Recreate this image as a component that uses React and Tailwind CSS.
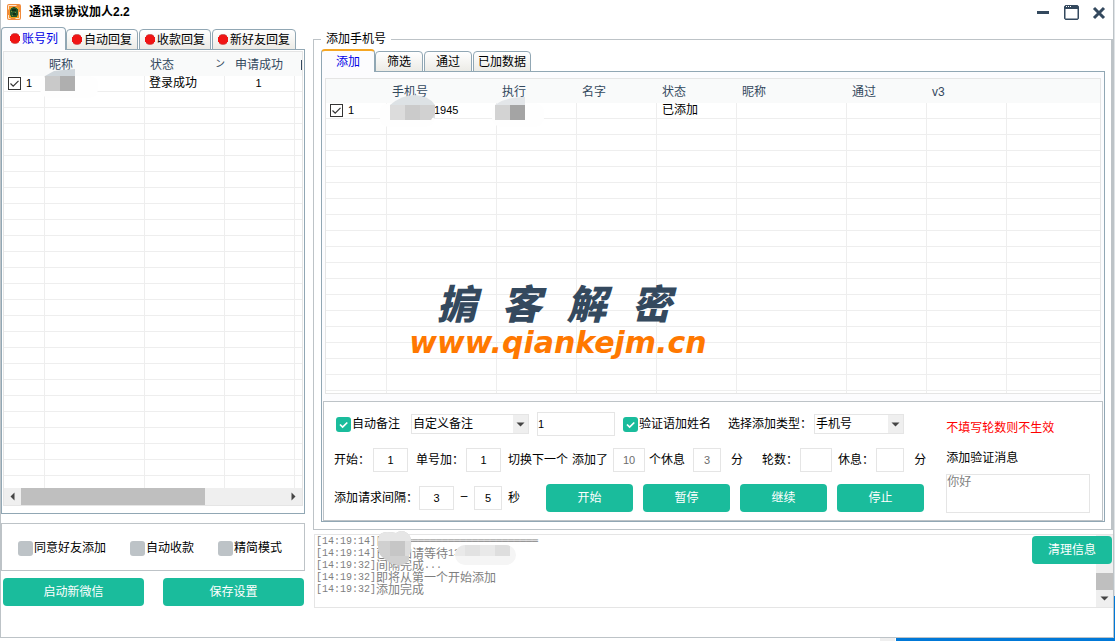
import { useState } from "react";
import clsx from "clsx";

const ACCOUNT_TABS = ["账号列", "自动回复", "收款回复", "新好友回复"];
const PHONE_TABS = ["添加", "筛选", "通过", "已加数据"];

const LOGS = [
  { time: "[14:19:14]", mono: "[══════════════════════════" },
  { time: "[14:19:14]", text: "已添加请等待", mono: "13" },
  { time: "[14:19:32]", text: "间隔完成", mono: "..." },
  { time: "[14:19:32]", text: "即将从第一个开始添加" },
  { time: "[14:19:32]", text: "添加完成" },
];

const emptyRows = (count) => Array.from({ length: count }, (_, i) => i);

const AppLogo = () => (
  <svg width="14" height="16" viewBox="0 0 14 16" aria-hidden="true">
    <rect width="14" height="16" rx="2" fill="#f08a3a" />
    <path d="M1.500 1.500h8M1.500 1.500v4M12.500 8v6.500h-4M1.500 11v3.500h2" fill="none" stroke="#ffe6cc" />
    <path d="M2.500 3h9v11h-9z" fill="#f0a21e" />
    <path d="M4 4h1l1-1h2l1 1h1v1h1v6l-1 1v1H4v-1L3 11V6l1-1z" fill="#24552a" />
    <path d="M5 5h4v2H5zM6 9h3v2H6z" fill="#123016" />
    <path d="M4 7h1v1H4zM8 8h1v1H8zM5 11h1v1H5z" fill="#7f8f2a" />
  </svg>
);

const RedDot = () => (
  <svg width="12" height="12" viewBox="0 0 12 12" className="shrink-0" aria-hidden="true">
    <circle cx="6" cy="5.500" r="5" fill="#2c6a70" />
    <path d="M3.500 0.500h5v1h1.500v1.500h1v5h-1v1.500H8.500v1h-5v-1H2V8H1V3h1V1.500h1.500z" fill="#f01414" />
  </svg>
);

const Arrow = ({ d, className }) => (
  <svg width="9" height="9" viewBox="0 0 9 9" className={className} aria-hidden="true">
    <path d={d} fill="#454545" />
  </svg>
);

const DOWN = "M0.500 2.500h8l-4 4z";
const LEFT = "M6.500 0.500v8l-4-4z";
const RIGHT = "M2.500 0.500v8l4-4z";

const GreenButton = ({ children, className }) => (
  <button type="button" className={clsx("h-7 shrink-0 rounded bg-[#1abc9c] text-white hover:bg-[#16a085]", className)}>
    {children}
  </button>
);

const CheckOption = ({ label, defaultChecked }) => {
  const [checked, setChecked] = useState(Boolean(defaultChecked));
  return (
    <label className="flex shrink-0 items-center gap-px">
      <span className="relative h-[15px] w-[15px]">
        <input
          type="checkbox"
          checked={checked}
          onChange={(e) => setChecked(e.target.checked)}
          className="block h-full w-full appearance-none rounded-[3px] bg-[#bdc3c7] checked:bg-[#1abc9c]"
        />
        {checked && (
          <svg viewBox="0 0 15 15" className="pointer-events-none absolute inset-0" aria-hidden="true">
            <path d="M4 7.500l2.600 2.600L11.300 5.500" fill="none" stroke="#fff" strokeWidth="1.700" />
          </svg>
        )}
      </span>
      {label}
    </label>
  );
};

const RowCheck = ({ number }) => {
  const [checked, setChecked] = useState(true);
  return (
    <label className="flex h-[15px] items-center gap-1 pl-1">
      <span className="relative h-[13px] w-[13px]">
        <input
          type="checkbox"
          checked={checked}
          onChange={(e) => setChecked(e.target.checked)}
          className="block h-full w-full appearance-none border border-[#333] bg-white"
        />
        {checked && (
          <svg viewBox="0 0 13 13" className="pointer-events-none absolute inset-0" aria-hidden="true">
            <path d="M2.500 6.500l2.700 2.700 5.300-5.300" fill="none" stroke="#333" strokeWidth="1.200" />
          </svg>
        )}
      </span>
      <span className="pl-px text-[11px]">{number}</span>
    </label>
  );
};

const SmallInput = ({ label, value, className }) => (
  <input
    type="text"
    aria-label={label}
    defaultValue={value}
    className={clsx("h-6 shrink-0 border border-[#e5e5e5] bg-white text-center text-[11px] outline-none", className)}
  />
);

const Dropdown = ({ id, options, className }) => (
  <span className={clsx("relative h-5 shrink-0", className)}>
    <select id={id} aria-label={options[0]} className="block h-full w-full appearance-none border border-[#e5e5e5] bg-white pl-px outline-none">
      {options.map((option) => (
        <option key={option}>{option}</option>
      ))}
    </select>
    <span className="pointer-events-none absolute inset-y-px right-px flex w-[15px] items-center justify-center bg-[#efefef]">
      <Arrow d={DOWN} />
    </span>
  </span>
);

const Tabs = ({ items, dots, tabClass }) => {
  const [active, setActive] = useState(0);
  return (
    <div role="tablist" className="relative z-10 -mb-px flex items-end">
      {items.map((item, i) => (
        <button
          key={item}
          type="button"
          role="tab"
          aria-selected={active === i}
          onClick={() => setActive(i)}
          className={clsx(
            "flex items-center justify-center gap-px rounded-t-sm border border-[#91a7b4]",
            tabClass,
            i > 1 && "ml-px",
            active === i
              ? "h-[23px] border-b-0 bg-[#fcfcfe] text-[#0000e6]"
              : "h-[21px] bg-linear-to-b from-white to-[#ecebe6]",
            active === i && !dots && "border-t-2 border-t-[#f5a623]"
          )}
        >
          {dots && <RedDot />}
          {item}
        </button>
      ))}
    </div>
  );
};

const th = "h-6 overflow-hidden p-0 pt-0.5 text-left font-normal whitespace-nowrap text-[#34495e]";
const td = "h-4 overflow-hidden border-r border-b border-[#eeeeee] p-0 leading-[15px] whitespace-nowrap";

const AccountTable = () => (
  <table className="w-full table-fixed border-separate border-spacing-0">
    <colgroup>
      <col className="w-[41px]" />
      <col className="w-[100px]" />
      <col className="w-[80px]" />
      <col className="w-[70px]" />
      <col />
    </colgroup>
    <thead className="bg-[#f9fafa]">
      <tr>
        <th className={th} />
        <th className={clsx(th, "pl-1")}>昵称</th>
        <th className={clsx(th, "pl-[5px]")}>
          <span className="flex justify-between">
            <span>状态</span>
            <span className="text-[10px]">ン</span>
          </span>
        </th>
        <th className={clsx(th, "pl-2.5")}>申请成功</th>
        <th className={th}>
          <span className="ml-1.5 block h-2.5 w-px bg-[#34495e]" />
        </th>
      </tr>
    </thead>
    <tbody>
      <tr>
        <td className={td}><RowCheck number="1" /></td>
        <td className={td} />
        <td className={clsx(td, "pl-1")}>登录成功</td>
        <td className={clsx(td, "pr-0.5 text-center text-[11px]")}>1</td>
        <td className={clsx(td, "border-r-0")} />
      </tr>
      {emptyRows(25).map((row) => (
        <tr key={row}>
          <td className={td} />
          <td className={td} />
          <td className={td} />
          <td className={td} />
          <td className={clsx(td, "border-r-0")} />
        </tr>
      ))}
    </tbody>
  </table>
);

const PhoneTable = () => (
  <table className="w-full table-fixed border-separate border-spacing-0">
    <colgroup>
      <col className="w-[61px]" />
      <col className="w-[110px]" />
      <col className="w-[80px]" />
      <col className="w-[80px]" />
      <col className="w-[80px]" />
      <col className="w-[110px]" />
      <col className="w-[80px]" />
      <col className="w-[80px]" />
      <col />
    </colgroup>
    <thead className="bg-[#f9fafa]">
      <tr>
        <th className={th} />
        {["手机号", "执行", "名字", "状态", "昵称", "通过", "v3"].map((name) => (
          <th key={name} className={clsx(th, "pl-[5px]")}>{name}</th>
        ))}
        <th className={th} />
      </tr>
    </thead>
    <tbody>
      <tr>
        <td className={td}><RowCheck number="1" /></td>
        <td className={clsx(td, "pl-[47px] text-[11px]")}>1945</td>
        <td className={td} />
        <td className={td} />
        <td className={clsx(td, "pl-[5px]")}>已添加</td>
        <td className={td} />
        <td className={td} />
        <td className={td} />
        <td className={clsx(td, "border-r-0")} />
      </tr>
      {emptyRows(18).map((row) => (
        <tr key={row}>
          {emptyRows(8).map((cell) => (
            <td key={cell} className={td} />
          ))}
          <td className={clsx(td, "border-r-0")} />
        </tr>
      ))}
    </tbody>
  </table>
);

const AccountMosaic = () => (
  <svg width="60" height="32" className="pointer-events-none absolute top-[17px] left-9" aria-hidden="true">
    <rect y="7" width="58" height="22" rx="9" fill="#fefefe" />
    <path d="M5 7L14 2l9-1 12-1v7z" fill="#ced5da" />
    <rect x="5" y="7" width="15" height="15" fill="#c9c9c9" />
    <rect x="20" y="7" width="15" height="15" fill="#afafaf" />
  </svg>
);

const PhoneMosaic = () => (
  <svg width="172" height="36" className="pointer-events-none absolute top-[14px] left-[54px]" aria-hidden="true">
    <rect y="10" width="54" height="24" rx="9" fill="#fefefe" />
    <rect x="112" y="10" width="52" height="24" rx="9" fill="#fefefe" />
    <path d="M10 12Q22 2 34 2q14 0 21 10v13H10z" fill="#dde2e5" />
    <path d="M10 12h15v15H10z" fill="#dcdcdc" />
    <path d="M25 12h15v15H25z" fill="#cbcbcb" />
    <path d="M40 12h15v9l-4 6H40z" fill="#d1d1d1" />
    <path d="M115 12q10-8 30-8v8z" fill="#e3e6e9" />
    <path d="M115 12h15v15h-15z" fill="#d3d3d3" />
    <path d="M130 12h15v15h-15z" fill="#a4a4a4" />
  </svg>
);

const LogMosaic = () => (
  <svg width="142" height="36" className="pointer-events-none absolute -top-[5px] left-[62px]" aria-hidden="true">
    <clipPath id="heart">
      <path d="M1 9Q2 2 10 2q6 0 9 1 6-4 11 0 5 3 4 13 0 7-2 9v6q-5 5-12 4Q11 33 4 26 0 22 1 9z" />
    </clipPath>
    <g clipPath="url(#heart)">
      <path d="M0 0h36v36H0z" fill="#d0d0d0" />
      <path d="M0 0h36v11H0z" fill="#e6e6e6" />
      <path d="M13 11h15v15H13z" fill="#c6c6c6" />
      <path d="M28 11h8v15h-8z" fill="#dcdcdc" />
    </g>
    <clipPath id="pill">
      <rect x="78" y="15" width="61" height="20" rx="10" />
    </clipPath>
    <g clipPath="url(#pill)">
      <path d="M78 15h62v20H78z" fill="#f5f5f5" />
      <path d="M78 15h10v11H78zM103 15h15v11h-15z" fill="#e9e9e9" />
      <path d="M88 15h15v11H88z" fill="#e2e2e2" />
      <path d="M118 15h15v11h-15z" fill="#dedede" />
    </g>
  </svg>
);

const Watermark = () => (
  <div className="pointer-events-none absolute inset-x-0 top-[198px] flex flex-col items-center pr-[310px] font-bold italic">
    <div className="flex gap-[25px] pr-2 text-[40px] leading-[56px] font-black text-[#34495e]">
      {["掮", "客", "解", "密"].map((char) => (
        <span key={char}>{char}</span>
      ))}
    </div>
    <div className="font-['DejaVu_Sans',sans-serif] text-[30px] leading-5 text-[#ff7800]">www.qiankejm.cn</div>
  </div>
);

const TitleBar = () => (
  <header className="flex h-[27px] shrink-0 items-start justify-between">
    <div className="flex items-center gap-2 pt-1 pl-1.5">
      <AppLogo />
      <h1 className="leading-4 font-bold">通讯录协议加人2.2</h1>
    </div>
    <div className="flex gap-3 pt-[5px] pr-1.5">
      <button type="button" aria-label="最小化" className="h-4 w-4">
        <svg width="16" height="16" viewBox="0 0 16 16"><path d="M2 6h12v3H2z" fill="#34495e" /></svg>
      </button>
      <button type="button" aria-label="最大化" className="h-4 w-4">
        <svg width="16" height="16" viewBox="0 0 16 16">
          <path d="M2.500 0h12L16 1.500v12L14.500 15h-12L1 13.500v-12zM2.500 4v9.500h12V4z" fill="#34495e" fillRule="evenodd" />
          <path d="M3 1h1v1H3zM5 1h1v1H5zM7 1h1v1H7z" fill="#fff" />
        </svg>
      </button>
      <button type="button" aria-label="关闭" className="h-4 w-4">
        <svg width="16" height="16" viewBox="0 0 16 16"><path d="M3 3l10 10M13 3L3 13" stroke="#34495e" strokeWidth="3" /></svg>
      </button>
    </div>
  </header>
);

const AccountPanel = () => (
  <aside className="flex w-[304px] shrink-0 flex-col pb-[31px]">
    <Tabs items={ACCOUNT_TABS} dots tabClass="pr-[5px] pl-1 first:px-[7px]" />
    <div className="flex min-h-0 flex-1 flex-col border border-[#91a7b4] px-px pt-px pb-[7px]">
      <div className="relative flex min-h-0 flex-1 flex-col border border-[#e5e5e5]">
        <div className="min-h-0 flex-1 overflow-hidden">
          <AccountTable />
        </div>
        <div className="flex h-[17px] shrink-0 items-center bg-[#efefef]">
          <Arrow d={LEFT} className="mx-1" />
          <div className="h-full w-[184px] bg-[#bfbfbf]" />
          <Arrow d={RIGHT} className="mr-1 ml-auto" />
        </div>
        <AccountMosaic />
      </div>
    </div>
    <div className="mt-[9px] flex h-12 shrink-0 items-center gap-6 border border-[#bdc3c7] pt-0.5 pl-4">
      <CheckOption label="同意好友添加" />
      <CheckOption label="自动收款" />
      <CheckOption label="精简模式" />
    </div>
    <div className="mt-[7px] flex shrink-0 gap-[19px] pr-px pl-0.5">
      <GreenButton className="flex-1">启动新微信</GreenButton>
      <GreenButton className="flex-1">保存设置</GreenButton>
    </div>
  </aside>
);

const SettingsForm = () => (
  <form className="flex shrink-0 border border-[#bdc3c7] bg-white pt-2.5 pr-3 pb-[7px]">
    <div className="flex shrink-0 flex-col gap-3 pl-2.5">
      <div className="flex h-6 items-center gap-2 pl-0.5">
        <CheckOption label="自动备注" defaultChecked />
        <Dropdown id="remark" options={["自定义备注"]} className="ml-[3px] w-[118px]" />
        <SmallInput label="备注" value="1" className="w-[78px] !text-left" />
        <CheckOption label="验证语加姓名" defaultChecked />
        <label htmlFor="kind" className="-mr-1.5 ml-[9px]">选择添加类型：</label>
        <Dropdown id="kind" options={["手机号"]} className="w-[90px]" />
      </div>
      <div className="flex h-6 items-center gap-1">
        <label className="flex items-center gap-[3px]">开始：<SmallInput value="1" className="w-[35px]" /></label>
        <label className="ml-1 flex items-center gap-0.5">单号加：<SmallInput value="1" className="w-[35px]" /></label>
        <span className="ml-[3px]">切换下一个</span>
        <label className="flex items-center gap-[5px]">添加了<SmallInput value="10" className="w-8 text-[#6d6d6d]" /></label>
        <label className="flex items-center gap-2">个休息<SmallInput value="3" className="w-7 text-[#6d6d6d]" /></label>
        <span className="ml-1.5">分</span>
        <label className="ml-[15px] flex items-center gap-0.5">轮数：<SmallInput className="w-8" /></label>
        <label className="ml-0.5 flex items-center gap-0.5">休息：<SmallInput className="w-7" /></label>
        <span className="ml-1.5">分</span>
      </div>
      <div className="flex h-7 items-center">
        <label className="flex items-center gap-px">添加请求间隔：<SmallInput value="3" className="w-[35px]" /></label>
        <span className="w-5 pb-1 text-center">–</span>
        <SmallInput label="间隔上限" value="5" className="w-7" />
        <span className="ml-1.5">秒</span>
        <div className="ml-[26px] flex gap-2.5">
          {["开始", "暂停", "继续", "停止"].map((name) => (
            <GreenButton key={name} className="w-[87px]">{name}</GreenButton>
          ))}
        </div>
      </div>
    </div>
    <div className="flex min-w-0 flex-1 flex-col pt-[7px] pl-5">
      <p className="leading-[18px] text-[#ff0000]">不填写轮数则不生效</p>
      <label htmlFor="verify" className="mt-3 leading-[18px]">添加验证消息</label>
      <textarea
        id="verify"
        defaultValue="你好"
        className="mt-[7px] block h-[39px] w-full resize-none border border-[#e5e5e5] leading-[14px] text-[#808080] outline-none"
      />
    </div>
  </form>
);

const LogPanel = () => (
  <section className="relative mt-1 ml-px flex h-[74px] shrink-0 border border-r-0 border-[#e5e5e5]">
    <div role="log" className="flex-1 pt-px pl-px leading-3 text-[#7f7f7f]">
      {LOGS.map((line, i) => (
        <p key={i} className="flex h-3 items-center whitespace-nowrap">
          <span className="font-['Liberation_Mono',monospace] text-[10px]">{line.time}</span>
          <span>{line.text}</span>
          <span className={clsx("font-['Liberation_Mono',monospace] text-[10px]", !line.text && "font-bold")}>{line.mono}</span>
        </p>
      ))}
    </div>
    <div className="flex w-[17px] flex-col items-center justify-end bg-[#efefef]">
      <div className="h-[17px] w-full bg-[#bfbfbf]" />
      <Arrow d={DOWN} className="my-1" />
    </div>
    <LogMosaic />
    <GreenButton className="absolute top-px right-px w-20">清理信息</GreenButton>
  </section>
);

const PhonePanel = () => (
  <main className="ml-2 flex min-w-0 flex-1 flex-col pt-[5px] pb-[29px]">
    <fieldset className="flex min-h-0 min-w-0 flex-1 flex-col border border-r-2 border-[#bdc3c7] pt-[3px] pr-1.5 pb-[7px] pl-[7px]">
      <legend className="px-[5px] leading-[14px]">添加手机号</legend>
      <Tabs items={PHONE_TABS} tabClass="px-1 min-w-12 first:min-w-[54px]" />
      <div className="flex min-h-0 flex-1 flex-col border border-[#91a7b4] bg-[#fcfcfe] px-px pt-1.5">
        <div className="relative mx-0.5 mb-[7px] min-h-0 flex-1 overflow-hidden border border-[#e5e5e5] bg-white">
          <PhoneTable />
          <PhoneMosaic />
          <Watermark />
        </div>
        <SettingsForm />
      </div>
    </fieldset>
    <LogPanel />
  </main>
);

const App = () => (
  <div className="flex h-screen flex-col bg-linear-to-b from-[#dfe3e6] from-93% to-[#0078d7] to-93% pr-px font-['Liberation_Sans','Noto_Sans_CJK_SC',sans-serif] text-xs text-black">
    <div className="flex min-h-0 flex-1 flex-col border border-t-0 border-[#bdc3c7] bg-white">
      <TitleBar />
      <div className="flex min-h-0 flex-1">
        <AccountPanel />
        <PhonePanel />
      </div>
    </div>
    <div className="flex h-[3px] shrink-0 bg-white">
      <div className="w-[79%]" />
      <div className="mr-px w-[15px] bg-[#efefef]" />
      <div className="flex-1 bg-[#0078d7]" />
    </div>
  </div>
);

export default App;
